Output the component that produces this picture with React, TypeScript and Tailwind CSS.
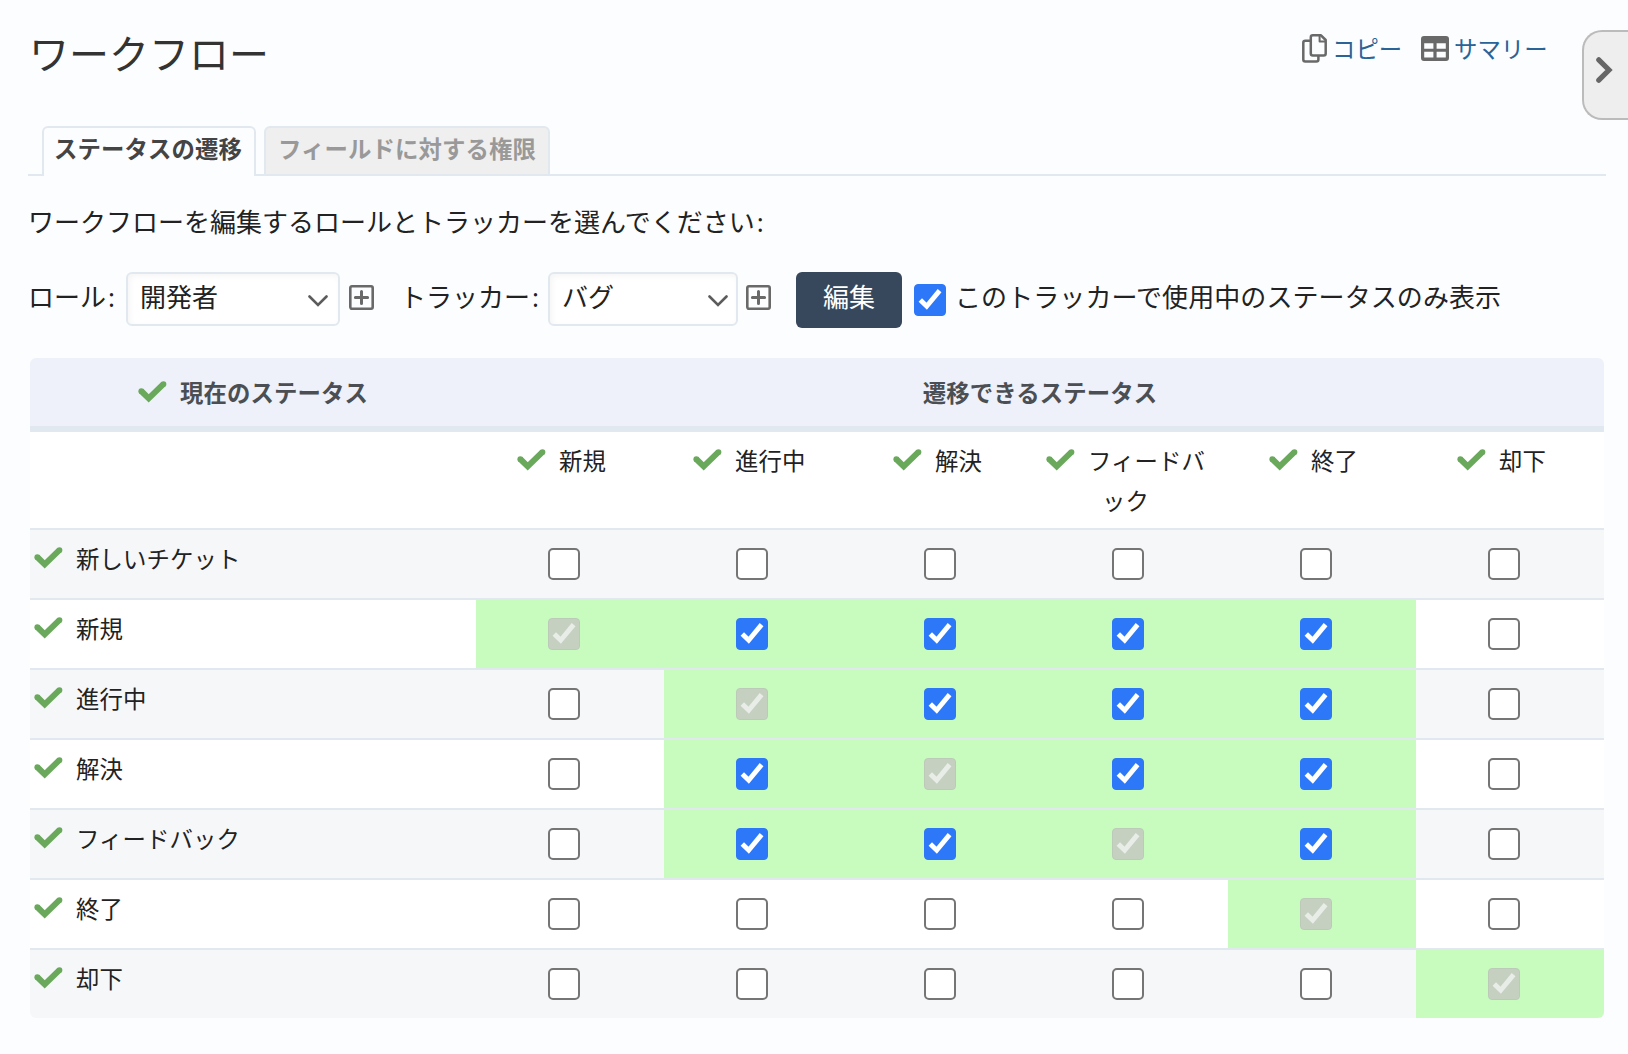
import type { ReactNode } from "react";

const statuses = ["新規", "進行中", "解決", "フィードバック", "終了", "却下"];

const headerPads = ["pl-[41px]", "pl-[29px]", "pl-[41px]", "pl-[6px]", "pl-[41px]", "pl-[41px]"];

type Row = { name: string; cells: string };

// "." empty, "x" allowed, "s" same status (locked)
const rows: Row[] = [
  { name: "新しいチケット", cells: "......" },
  { name: "新規", cells: "sxxxx." },
  { name: "進行中", cells: ".sxxx." },
  { name: "解決", cells: ".xsxx." },
  { name: "フィードバック", cells: ".xxsx." },
  { name: "終了", cells: "....s." },
  { name: "却下", cells: ".....s" },
];

function Tick() {
  return (
    <svg className="h-[22px] w-[29px] shrink-0" viewBox="0 0 29 22" fill="none">
      <path d="M3.2 10 L10.7 17.3 L25.6 2.9" stroke="#6aa95c" strokeWidth="6" strokeLinejoin="miter" />
      <circle cx="3.3" cy="10.2" r="2.9" fill="#6aa95c" />
      <circle cx="25.5" cy="3.1" r="2.9" fill="#6aa95c" />
    </svg>
  );
}

function Checkbox({ state }: { state: string }) {
  if (state === ".") {
    return <span className="block size-8 rounded-[5px] border-2 border-[#757575] bg-white" />;
  }
  const locked = state === "s";
  return (
    <span
      className={
        locked
          ? "block size-8 rounded-[4px] border border-[#bdcab9] bg-[#c5d0c1]"
          : "block size-8 rounded-[4px] border border-[#2c78f8] bg-[#2c78f8]"
      }
    >
      <svg className="block size-[30px]" viewBox="1 1 30 30" fill="none">
        <path d="M6.3 16 L12.7 22.2 L25.6 6.6" stroke={locked ? "#e8ede7" : "#ffffff"} strokeWidth="4.9" />
      </svg>
    </span>
  );
}

function Select({ label, className }: { label: string; className: string }) {
  return (
    <div
      className={
        "flex h-[54px] items-center justify-between rounded-[6px] border-2 border-[#e2e8f0] bg-white pl-3 text-[#222] shadow-[inset_2px_2px_6px_#f5f5f5] " +
        className
      }
    >
      <span className="-mt-[3px]">{label}</span>
      <svg className="mt-1 h-[12px] w-[20px]" viewBox="0 0 20 12" fill="none">
        <path d="M1.5 1.5 L10 10 L18.5 1.5" stroke="#5c5c5c" strokeWidth="2.6" strokeLinecap="round" />
      </svg>
    </div>
  );
}

function PlusBox({ className }: { className: string }) {
  return (
    <svg className={"mb-[3px] size-[25px] shrink-0 " + className} viewBox="0 0 25 25" fill="none" stroke="#696969">
      <rect x="1.3" y="1.3" width="22.4" height="22.4" rx="1.6" strokeWidth="2.6" />
      <path d="M6.4 12.5 H18.6 M12.5 6.4 V18.6" strokeWidth="3" strokeLinecap="round" />
    </svg>
  );
}

function Label({ children, className }: { children: ReactNode; className: string }) {
  return <span className={"-mt-[3px] shrink-0 whitespace-nowrap " + className}>{children}</span>;
}

function Colon() {
  return <span className="ml-[2px] inline-block">:</span>;
}

export default function App() {
  return (
    <div className="h-[1054px] w-[1628px] overflow-hidden bg-[#fcfdff] font-['Noto_Sans','Noto_Sans_CJK_JP',sans-serif] text-[26px] text-[#222]">
      <header className="flex h-[126px] items-start">
        <h1 className="mt-[24px] ml-[29px] text-[40px] leading-[60px] text-[#333]">ワークフロー</h1>
        <div className="mt-[31px] ml-auto flex items-center text-[23.4px] leading-[34px] text-[#2a6496]">
          <svg className="-mt-px h-[29px] w-[25px]" viewBox="0 0 25 29" fill="none" stroke="#696969" strokeWidth="2.5" strokeLinejoin="round">
            <path d="M11 1.3 H19 L23.7 6 V19.5 Q23.7 21.5 21.7 21.5 H10.8 Q8.8 21.5 8.8 19.5 V3.3 Q8.8 1.3 10.8 1.3 Z" />
            <path d="M17.6 1.6 V7.6 H23.4" strokeWidth="2" />
            <path d="M8.8 6.8 H3.3 Q1.3 6.8 1.3 8.8 V25.4 Q1.3 27.4 3.3 27.4 H14.4 Q16.4 27.4 16.4 25.4 V21.8" />
          </svg>
          <a className="mt-px ml-[5px] w-[70px] whitespace-nowrap">コピー</a>
          <svg className="-mt-px ml-[19px] h-[25px] w-[28px]" viewBox="0 0 28 25">
            <path
              fill="#696969"
              fillRule="evenodd"
              d="M3 0 H25 Q28 0 28 3 V22 Q28 25 25 25 H3 Q0 25 0 22 V3 Q0 0 3 0 Z M3.2 7.3 V12.7 H12.4 V7.3 Z M15.6 7.3 V12.7 H24.8 V7.3 Z M3.2 15.8 V21.5 H12.4 V15.8 Z M15.6 15.8 V21.5 H24.8 V15.8 Z"
            />
          </svg>
          <a className="mt-px ml-[5px] w-[94px] whitespace-nowrap">サマリー</a>
        </div>
        <button className="mt-[30px] ml-[34px] flex h-[90px] w-[46px] items-center rounded-l-[20px] border-2 border-r-0 border-[#bbb] bg-[#eee] pb-[10px] pl-[12px]">
          <svg className="h-[26px] w-[17px]" viewBox="0 0 17 26" fill="none">
            <path d="M2.8 2.8 L13 13 L2.8 23.2" stroke="#666" strokeWidth="5.2" strokeLinecap="round" />
          </svg>
        </button>
      </header>

      <nav className="mr-[22px] ml-[28px] flex h-[50px] text-[23.4px] font-bold">
        <span className="w-[14px] border-b-2 border-[#e2e8f0]" />
        <a className="w-[214px] rounded-t-[6px] border-2 border-b-0 border-[#e2e8f0] pl-[10px] leading-[42px] tracking-[0.1px] whitespace-nowrap text-[#444]">
          ステータスの遷移
        </a>
        <span className="w-[8px] border-b-2 border-[#e2e8f0]" />
        <a className="w-[286px] rounded-t-[6px] border-2 border-[#e2e8f0] bg-[#efefef] pl-[12px] leading-[42px] tracking-[0.1px] whitespace-nowrap text-[#999]">
          フィールドに対する権限
        </a>
        <span className="flex-1 border-b-2 border-[#e2e8f0]" />
      </nav>

      <p className="mt-[26px] ml-[28px] h-[40px] leading-[40px]">
        ワークフローを編集するロールとトラッカーを選んでください
        <Colon />
      </p>

      <div className="mt-[30px] ml-[28px] flex h-[56px] items-start">
        <div className="flex h-[54px] items-center">
          <Label className="w-[98px]">
            ロール
            <Colon />
          </Label>
          <Select label="開発者" className="w-[214px] pr-2.5" />
          <PlusBox className="ml-[9px]" />
          <Label className="ml-[26px] w-[148px]">
            トラッカー
            <Colon />
          </Label>
          <Select label="バグ" className="w-[190px] pr-2" />
          <PlusBox className="ml-[8px]" />
        </div>
        <button className="ml-[25px] h-[56px] w-[106px] rounded-[6px] bg-[#37475c] pb-1.5 text-white">編集</button>
        <div className="ml-[12px] flex h-[56px] items-center">
          <Checkbox state="x" />
          <Label className="-mt-[5px] ml-[9px] tracking-[0.08px]">このトラッカーで使用中のステータスのみ表示</Label>
        </div>
      </div>

      <section className="mt-[30px] ml-[30px] w-[1574px] overflow-hidden rounded-[6px] text-[23.4px] tracking-[0.1px]">
        <div className="grid h-[74px] grid-cols-[446px_1fr] border-b-[6px] border-[#e2e8f0] bg-[#eef1fa] font-bold text-[#4b4f54]">
          <div className="flex h-[68px] items-center pl-[108px]">
            <Tick />
            <span className="mt-[3px] ml-[13px]">現在のステータス</span>
          </div>
          <div className="flex h-[68px] items-center justify-center pt-[3px]">遷移できるステータス</div>
        </div>

        <div className="grid h-[98px] grid-cols-[446px_repeat(6,188px)] border-b-2 border-[#e2e8f0] bg-white">
          <span />
          {statuses.map((name, i) => (
            <div key={name} className={"flex items-start pt-[9px] leading-[40px] " + headerPads[i]}>
              <div className="mt-[8px] mr-[13px]">
                <Tick />
              </div>
              {name.length > 5 ? (
                <div>
                  フィードバ
                  <div className="pl-[14px]">ック</div>
                </div>
              ) : (
                <span>{name}</span>
              )}
            </div>
          ))}
        </div>

        {rows.map((row, r) => (
          <div
            key={row.name}
            className={
              "grid grid-cols-[446px_repeat(6,188px)] " +
              (r % 2 === 0 ? "bg-[#f6f7f9] " : "bg-white ") +
              (r === rows.length - 1 ? "h-[68px]" : "h-[70px] border-b-2 border-[#e2e8f0]")
            }
          >
            <div className="flex h-[58px] items-center pl-[4px]">
              <div className="mb-[3px]">
                <Tick />
              </div>
              <span className="mt-px ml-[13px]">{row.name}</span>
            </div>
            {row.cells.split("").map((state, c) => (
              <div key={c} className={"pt-[18px] pl-[72px] " + (state === "." ? "" : "bg-[#c8fcbf]")}>
                <Checkbox state={state} />
              </div>
            ))}
          </div>
        ))}
      </section>
    </div>
  );
}
